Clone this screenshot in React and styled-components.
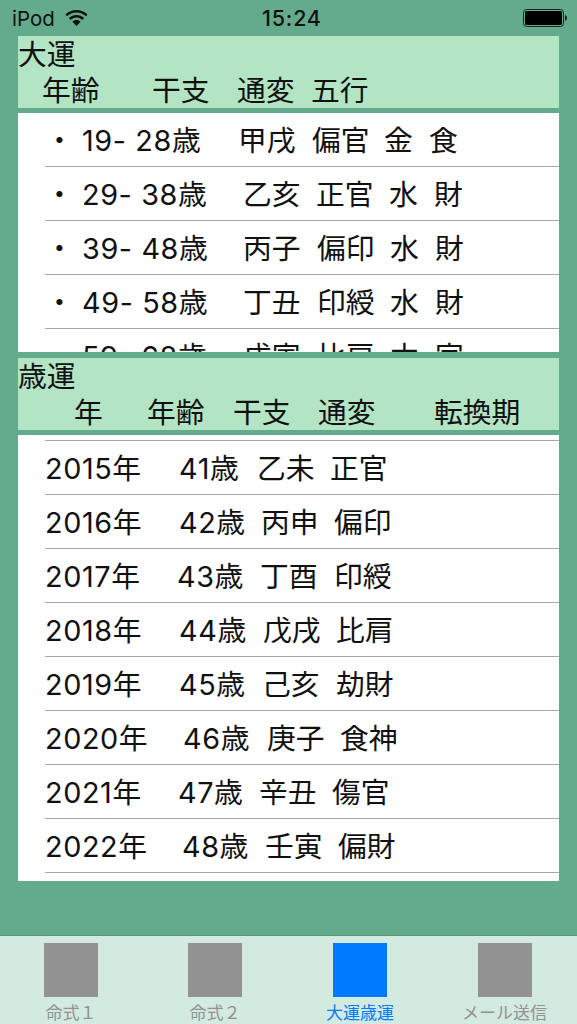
import React from 'react';
import styled, { createGlobalStyle } from 'styled-components';

const fontStack = `Inter, "Noto Sans CJK JP", sans-serif`;

const daiun = [
  [['・', 37], ['19- 28歳', 156], ['甲戌', 74], ['偏官', 72], ['金', 45], ['食', 40]],
  [['・', 37], ['29- 38歳', 161], ['乙亥', 73], ['正官', 73], ['水', 45], ['財', 40]],
  [['・', 37], ['39- 48歳', 161], ['丙子', 74], ['偏印', 73], ['水', 45], ['財', 40]],
  [['・', 37], ['49- 58歳', 161], ['丁丑', 74], ['印綬', 73], ['水', 45], ['財', 40]],
  [['・', 37], ['59- 68歳', 161], ['戊寅', 74], ['比肩', 73], ['木', 45], ['官', 40]],
];

const saiun = [
  [['2015年', 134], ['41歳', 78], ['乙未', 73], ['正官', 60]],
  [['2016年', 134], ['42歳', 82], ['丙申', 73], ['偏印', 60]],
  [['2017年', 132], ['43歳', 83], ['丁酉', 74], ['印綬', 60]],
  [['2018年', 134], ['44歳', 84], ['戊戌', 73], ['比肩', 60]],
  [['2019年', 134], ['45歳', 83], ['己亥', 74], ['劫財', 60]],
  [['2020年', 138], ['46歳', 84], ['庚子', 73], ['食神', 60]],
  [['2021年', 133], ['47歳', 81], ['辛丑', 73], ['傷官', 60]],
  [['2022年', 137], ['48歳', 83], ['壬寅', 73], ['偏財', 60]],
];

const tabs = [
  { label: '命式１' },
  { label: '命式２' },
  { label: '大運歳運', active: true },
  { label: 'メール送信' },
];

const hasDigit = (text) => /\d/.test(text);

function WifiIcon() {
  return (
    <svg width="23" height="16" viewBox="0 0 23 16">
      <path d="M11.5 0C7.2 0 3.3 1.7.4 4.5l1.7 1.8C4.5 3.900 7.800 2.500 11.500 2.500s7 1.400 9.400 3.800l1.700-1.800C19.700 1.700 15.800 0 11.500 0z" fill="#111" />
      <path d="M11.5 5C8.6 5 5.9 6.1 3.9 8.100l1.800 1.800c1.500-1.500 3.500-2.400 5.800-2.400s4.300.9 5.800 2.400l1.800-1.800C17.100 6.100 14.400 5 11.500 5z" fill="#111" />
      <path d="M11.5 10c-1.6 0-3 .6-4.100 1.700L11.500 16l4.100-4.300C14.500 10.600 13.100 10 11.500 10z" fill="#111" />
    </svg>
  );
}

function BatteryIcon() {
  return (
    <svg width="44" height="18" viewBox="0 0 44 18">
      <rect x="0.5" y="0.5" width="40" height="17" rx="3" fill="none" stroke="#222" />
      <rect x="2" y="2" width="37" height="14" rx="1.500" fill="#000" />
      <path d="M42 6c1.100.3 2 1.500 2 3s-.9 2.700-2 3z" fill="#222" />
    </svg>
  );
}

function App() {
  return (
    <Page>
      <GlobalStyle />
      <StatusBar>
        <Carrier>iPod</Carrier>
        <WifiIcon />
        <Clock>15:24</Clock>
        <BatteryIcon />
      </StatusBar>

      <Content>
        <SectionHeader>
          <SectionTitle>大運</SectionTitle>
          <ColumnHeads>
            <Cell $w={110} $first={24}>年齢</Cell>
            <Cell $w={85}>干支</Cell>
            <Cell $w={74}>通変</Cell>
            <Cell $w={60}>五行</Cell>
          </ColumnHeads>
        </SectionHeader>
        <DaiunList>
          {daiun.map((row, index) => (
            <DaiunRow key={index}>
              {row.map(([text, w]) => (
                <Cell key={text} $w={w} $num={hasDigit(text)}>{text}</Cell>
              ))}
            </DaiunRow>
          ))}
        </DaiunList>

        <SectionHeader>
          <SectionTitle>歳運</SectionTitle>
          <ColumnHeads>
            <Cell $w={73} $first={56}>年</Cell>
            <Cell $w={86}>年齢</Cell>
            <Cell $w={85}>干支</Cell>
            <Cell $w={116}>通変</Cell>
            <Cell $w={90}>転換期</Cell>
          </ColumnHeads>
        </SectionHeader>
        <SaiunList>
          {saiun.map((row, index) => (
            <SaiunRow key={index}>
              {row.map(([text, w]) => (
                <Cell key={text} $w={w} $num={hasDigit(text)}>{text}</Cell>
              ))}
            </SaiunRow>
          ))}
        </SaiunList>
      </Content>

      <TabBar>
        {tabs.map((tab) => (
          <Tab key={tab.label} $active={tab.active}>
            <TabIcon $active={tab.active} />
            <TabLabel>{tab.label}</TabLabel>
          </Tab>
        ))}
      </TabBar>
    </Page>
  );
}

const GlobalStyle = createGlobalStyle`
  html, body {
    margin: 0;
    padding: 0;
    background-color: #64aa8c;
  }
`;

const Page = styled.div`
  width: 577px;
  height: 1024px;
  display: flex;
  flex-direction: column;
  overflow: hidden;
  background-color: #64aa8c;
  color: #111;
  font-family: ${fontStack};
`;

const StatusBar = styled.div`
  height: 36px;
  flex: none;
  display: flex;
  align-items: center;
  padding: 0 10px 0 12px;
  font-size: 20.5px;
`;

const Carrier = styled.div`
  width: 53px;
`;

const Clock = styled.div`
  margin-left: 174px;
  margin-right: auto;
  font-weight: 500;
  font-size: 21.5px;
  letter-spacing: 0.8px;
`;

const Content = styled.div`
  flex: 1;
  padding: 0 18px;
`;

const SectionHeader = styled.div`
  height: 72px;
  background-color: #b3e5c5;
  font-size: 28.8px;
  line-height: 36px;
`;

const SectionTitle = styled.div`
  height: 36px;
  padding-top: 1px;
  box-sizing: border-box;
`;

const ColumnHeads = styled.div`
  display: flex;
  height: 36px;
  padding-top: 1px;
  box-sizing: border-box;
`;

const Cell = styled.div`
  flex: none;
  width: ${(props) => props.$w}px;
  margin-left: ${(props) => props.$first || 0}px;
  letter-spacing: ${(props) => (props.$num ? '0.6px' : '0')};
  white-space: nowrap;
`;

const DaiunList = styled.div`
  height: 239px;
  margin: 5px 0 6px;
  overflow: hidden;
  background-color: #fff;
`;

const SaiunList = styled.div`
  height: 446px;
  margin-top: 5px;
  padding-top: 5px;
  box-sizing: border-box;
  background-color: #fff;
`;

const Row = styled.div`
  height: 54px;
  box-sizing: border-box;
  margin-left: 27px;
  padding-bottom: 3px;
  display: flex;
  align-items: center;
  font-size: 28.8px;
  border-color: #a9a9a9;
  border-style: solid;
  border-width: 0;
`;

const DaiunRow = styled(Row)`
  border-bottom-width: 1px;
`;

const SaiunRow = styled(Row)`
  border-top-width: 1px;
  &:last-child {
    height: 55px;
    border-bottom-width: 1px;
  }
`;

const TabBar = styled.div`
  flex: none;
  height: 89px;
  box-sizing: border-box;
  display: grid;
  grid-template-columns: 142px 146px 144px 145px;
  background-color: #d2eadf;
  border-top: 1px solid #5a9a80;
`;

const Tab = styled.div`
  display: flex;
  flex-direction: column;
  align-items: center;
  padding-top: 7px;
  color: ${(props) => (props.$active ? '#007aff' : '#929292')};
`;

const TabIcon = styled.div`
  width: 54px;
  height: 54px;
  background-color: ${(props) => (props.$active ? '#007aff' : '#929292')};
`;

const TabLabel = styled.div`
  margin-top: 6px;
  font-size: 17px;
  line-height: 20px;
  white-space: nowrap;
`;

export default App;
